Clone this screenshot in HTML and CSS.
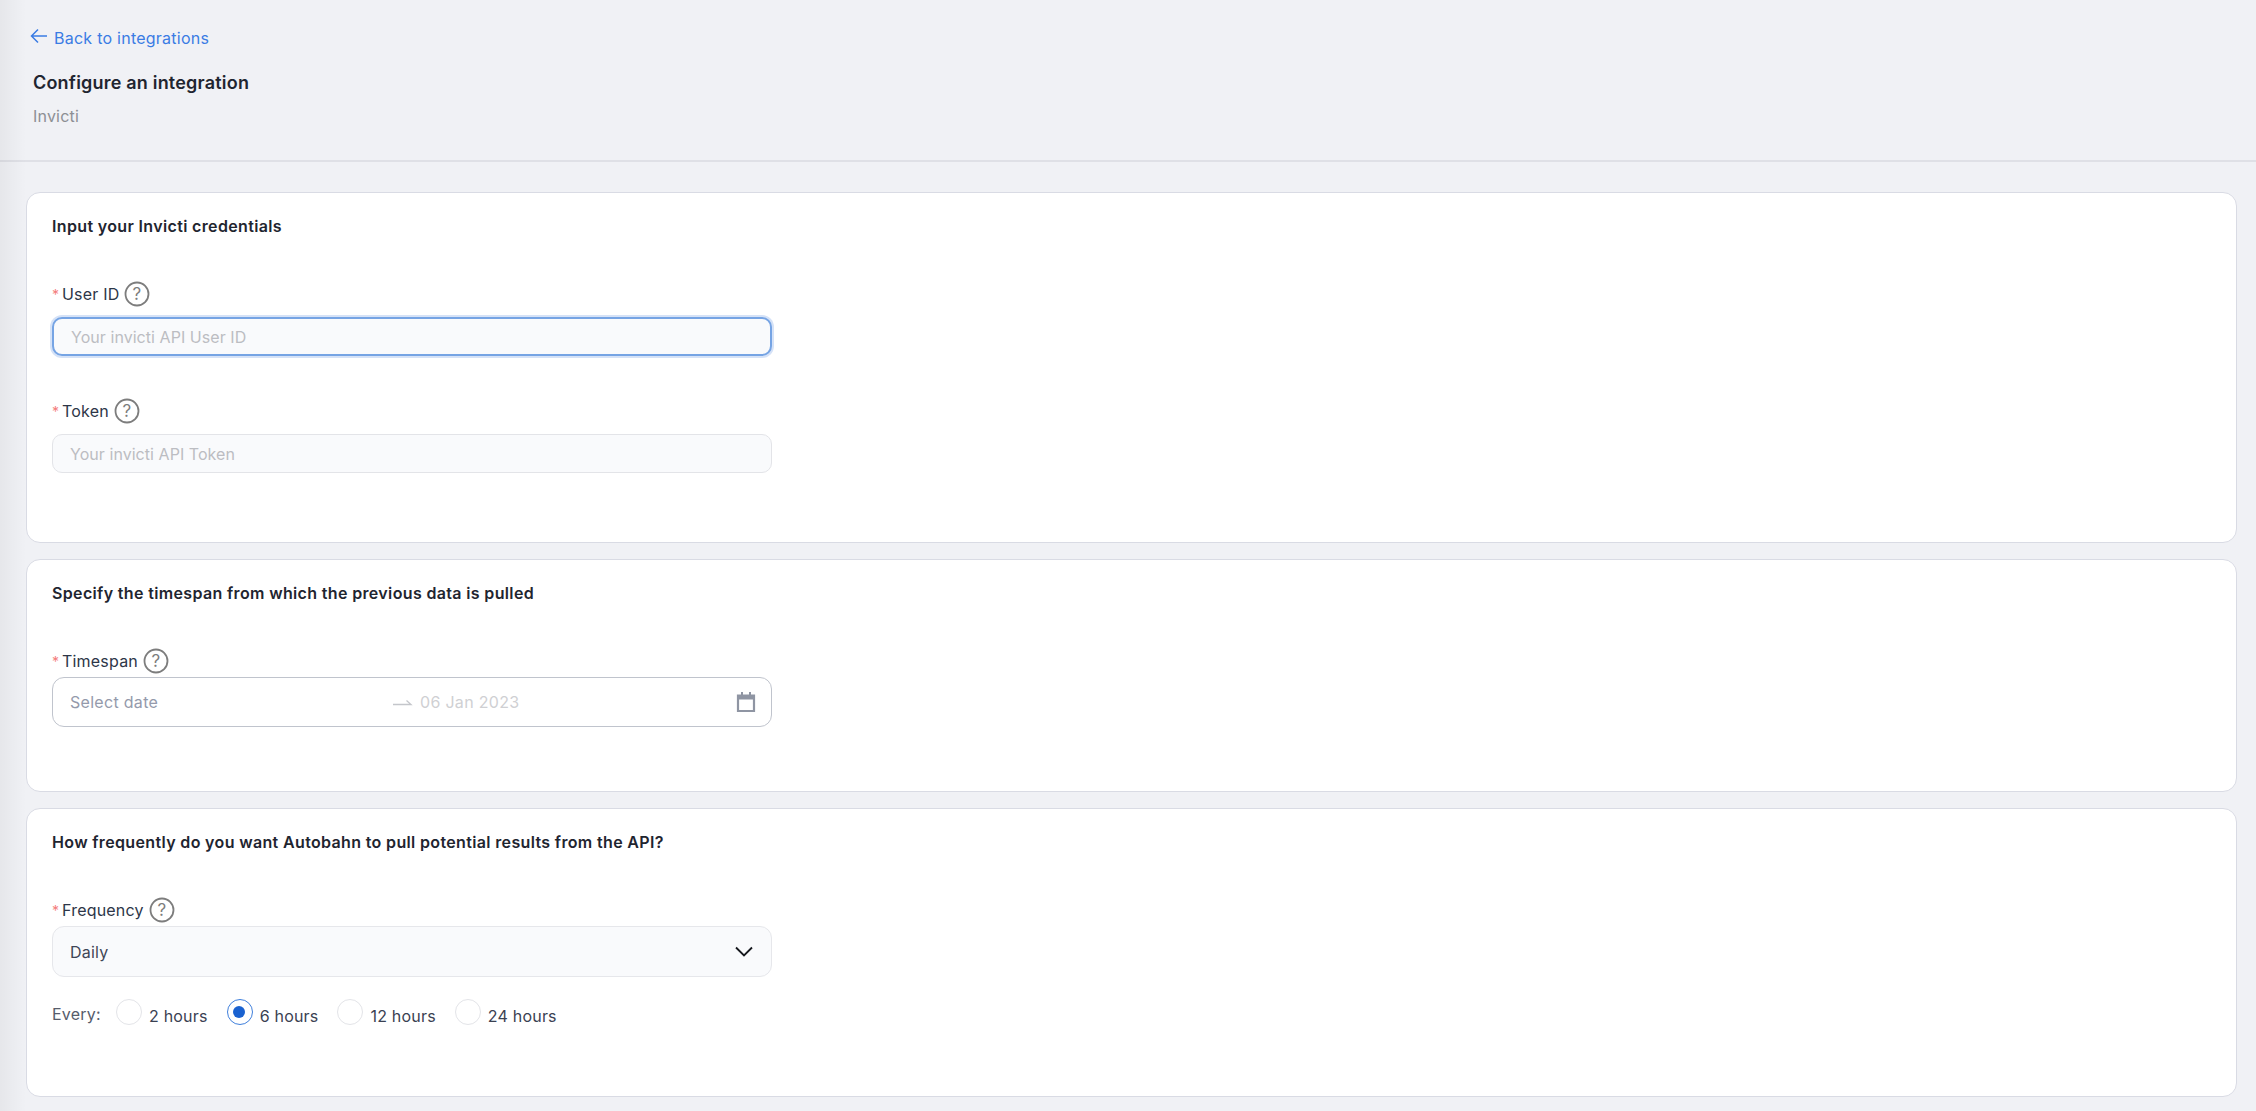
FILE: index.html
```html
<!DOCTYPE html>
<html lang="en">
<head>
<meta charset="utf-8">
<title>Configure an integration</title>
<link rel="stylesheet" href="styles.css">
</head>
<body>
<div class="edge-shadow"></div>
<header class="page-header">
  <a class="back-link" href="#">
    <svg class="back-icon" viewBox="0 0 18 16" width="18" height="16"><path d="M17 8H2M8 1.500 1.500 8 8 14.500" fill="none" stroke="currentColor" stroke-width="1.500"/></svg>
    <span>Back to integrations</span>
  </a>
  <h1 class="page-title">Configure an integration</h1>
  <p class="page-sub">Invicti</p>
</header>
<main class="content">
  <section class="card card-creds">
    <h2 class="card-title">Input your Invicti credentials</h2>
    <div class="field first-field">
      <label class="label"><span class="req">*</span>User ID<svg class="help" viewBox="0 0 26 26" width="26" height="26"><circle cx="13" cy="13" r="11.500" fill="none" stroke="#7d7d7d" stroke-width="1.800"/><text x="13" y="19" text-anchor="middle" class="help-q">?</text></svg></label>
      <div class="input focus">Your invicti API User ID</div>
    </div>
    <div class="field second-field">
      <label class="label"><span class="req">*</span>Token<svg class="help" viewBox="0 0 26 26" width="26" height="26"><circle cx="13" cy="13" r="11.500" fill="none" stroke="#7d7d7d" stroke-width="1.800"/><text x="13" y="19" text-anchor="middle" class="help-q">?</text></svg></label>
      <div class="input">Your invicti API Token</div>
    </div>
  </section>
  <section class="card card-time">
    <h2 class="card-title">Specify the timespan from which the previous data is pulled</h2>
    <div class="field first-field">
      <label class="label"><span class="req">*</span>Timespan<svg class="help" viewBox="0 0 26 26" width="26" height="26"><circle cx="13" cy="13" r="11.500" fill="none" stroke="#7d7d7d" stroke-width="1.800"/><text x="13" y="19" text-anchor="middle" class="help-q">?</text></svg></label>
      <div class="range">
        <span class="range-start">Select date</span>
        <svg class="range-arrow" viewBox="0 0 20 8" width="20" height="8"><path d="M0 6.500H18L13.500 2.500" fill="none" stroke="#c4c6cb" stroke-width="1.300"/></svg>
        <span class="range-end">06 Jan 2023</span>
        <svg class="cal" viewBox="0 0 20 22" width="20" height="22"><path d="M2 4.500H18V20H2Z" fill="none" stroke="#8f95a3" stroke-width="2.200"/><path d="M2 4H18V8.500H2Z" fill="#8f95a3"/><path d="M6 1V5M14 1V5" fill="none" stroke="#8f95a3" stroke-width="2"/></svg>
      </div>
    </div>
  </section>
  <section class="card card-freq">
    <h2 class="card-title">How frequently do you want Autobahn to pull potential results from the API?</h2>
    <div class="field first-field">
      <label class="label"><span class="req">*</span>Frequency<svg class="help" viewBox="0 0 26 26" width="26" height="26"><circle cx="13" cy="13" r="11.500" fill="none" stroke="#7d7d7d" stroke-width="1.800"/><text x="13" y="19" text-anchor="middle" class="help-q">?</text></svg></label>
      <div class="select"><span>Daily</span><svg viewBox="0 0 18 11" width="18" height="11"><path d="M1 1.500 9 9.500 17 1.500" fill="none" stroke="#16181d" stroke-width="1.800"/></svg></div>
    </div>
    <div class="radios">
      <span class="every">Every:</span>
      <span class="radio-item"><i class="radio"></i><span class="radio-text">2 hours</span></span>
      <span class="radio-item"><i class="radio on"></i><span class="radio-text">6 hours</span></span>
      <span class="radio-item"><i class="radio"></i><span class="radio-text">12 hours</span></span>
      <span class="radio-item"><i class="radio"></i><span class="radio-text">24 hours</span></span>
    </div>
  </section>
</main>
</body>
</html>
```
FILE: styles.css
```css
* { box-sizing: border-box; }
html, body { height: 100%; }
body {
  margin: 0;
  height: 1111px;
  overflow: hidden;
  background: #f0f1f5;
  font-family: Inter, "Liberation Sans", sans-serif;
  color: #1e2430;
  position: relative;
}
.edge-shadow {
  position: absolute;
  inset: 0 auto 0 0;
  width: 26px;
  background: linear-gradient(to right, rgba(0,0,0,.045), rgba(0,0,0,0));
  pointer-events: none;
}
.page-header {
  height: 162px;
  border-bottom: 2px solid #dfe0e6;
  padding: 26px 0 0 28px;
}
.back-link {
  display: flex;
  align-items: center;
  gap: 6px;
  margin-left: 2px;
  height: 24px;
  color: #3a7ce4;
  text-decoration: none;
  font-size: 16px;
  letter-spacing: .25px;
}
.back-icon { margin-top: -4px; }
.page-title {
  margin: 21px 0 0 5px;
  font-size: 18px;
  line-height: 24px;
  font-weight: 600;
  letter-spacing: .2px;
  color: #1f2530;
}
.page-sub {
  margin: 9px 0 0 5px;
  font-size: 16px;
  line-height: 24px;
  color: #8d8f94;
  letter-spacing: .2px;
}
.content {
  padding: 30px 19px 0 26px;
  display: flex;
  flex-direction: column;
  gap: 16px;
}
.card {
  background: #fff;
  border: 1.500px solid #d9dbe4;
  border-radius: 14px;
  padding: 22px 25px 0;
}
.card-creds { height: 351px; }
.card-time { height: 233px; }
.card-freq { height: 289px; }
.card-title {
  margin: 0;
  font-size: 16px;
  line-height: 22px;
  font-weight: 600;
  letter-spacing: .35px;
  color: #1f2530;
}
.first-field { margin-top: 43px; }
.second-field { margin-top: 41px; }
.label {
  display: flex;
  align-items: center;
  height: 28px;
  font-size: 16px;
  color: #2d3648;
  letter-spacing: .2px;
}
.req { color: #f47c7c; width: 10px; font-size: 14px; }
.help { margin-left: 5px; }
.help-q { font-size: 17px; fill: #7d7d7d; font-family: Inter, sans-serif; }
.input {
  margin-top: 9px;
  width: 720px;
  height: 39px;
  border: 1.500px solid #e3e4e8;
  border-radius: 10px;
  background: #f9fafc;
  padding-left: 17px;
  display: flex;
  align-items: center;
  font-size: 16px;
  letter-spacing: .05px;
  color: #bcbdc2;
}
.input.focus {
  border: 2px solid #76a4e4;
  box-shadow: 0 0 0 2px #d5e2f7;
}
.range {
  margin-top: 2px;
  width: 720px;
  height: 50px;
  border: 1.500px solid #c0c4cd;
  border-radius: 12px;
  padding: 0 15px 0 17px;
  display: flex;
  align-items: center;
  font-size: 16px;
  letter-spacing: .3px;
}
.range-start { width: 323px; color: #949aab; }
.range-arrow { margin-right: 7px; }
.range-end { color: #cfd0d3; }
.cal { margin-left: auto; }
.select {
  margin-top: 2px;
  width: 720px;
  height: 51px;
  border: 1.500px solid #e6e7eb;
  border-radius: 12px;
  background: #f9fafc;
  padding: 0 18px 0 17px;
  display: flex;
  align-items: center;
  justify-content: space-between;
  font-size: 16px;
  letter-spacing: .2px;
  color: #3f4656;
}
.radios {
  margin-top: 23px;
  display: flex;
  align-items: center;
  height: 28px;
  font-size: 16px;
  letter-spacing: .2px;
  color: #3a4152;
}
.every { width: 64px; color: #565c6b; }
.radio-item { display: flex; align-items: center; margin-right: 19px; }
.radio-text { padding-top: 4px; }
.radio {
  width: 26px;
  height: 26px;
  border: 1.500px solid #e3e4e8;
  border-radius: 50%;
  margin: -4px 7px 0 0;
  background: #fff;
  position: relative;
  flex: none;
}
.radio.on { border-color: #3f7fdc; }
.radio.on::after {
  content: "";
  position: absolute;
  left: 5.500px;
  top: 5.500px;
  width: 12px;
  height: 12px;
  border-radius: 50%;
  background: #1a62d0;
}
```
